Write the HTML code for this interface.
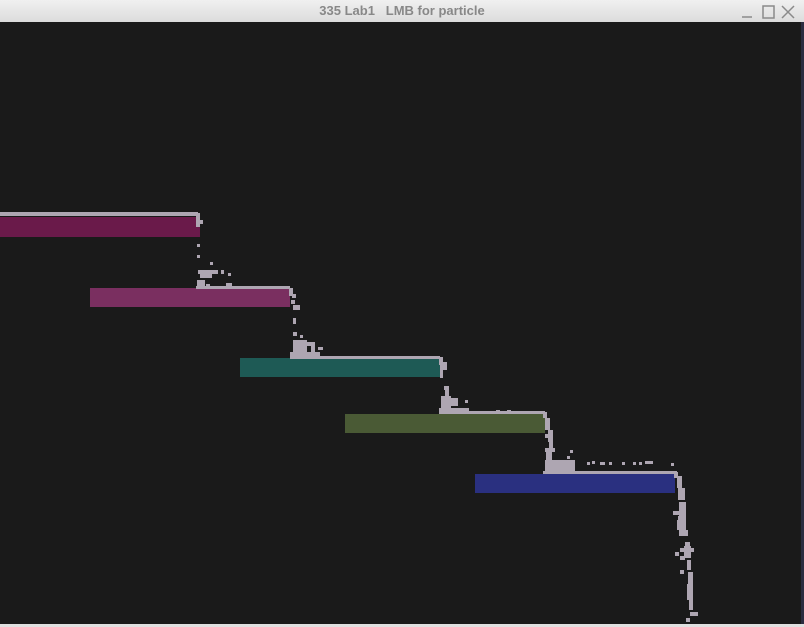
<!DOCTYPE html>
<html><head><style>
html,body{margin:0;padding:0;width:804px;height:627px;overflow:hidden;background:#1a1a1a}
#tb{position:absolute;left:0;top:0;width:804px;height:22px;background:linear-gradient(#f0f0f0,#dcdcdc);border-bottom:1px solid #999;font-family:"Liberation Sans",sans-serif;font-size:13px;color:#888;text-align:center;line-height:22px;font-weight:bold}
#cv{position:absolute;left:0;top:22px}
#rs{position:absolute;left:801px;top:22px;width:3px;height:602px;background:#2a2c40}
#bt{position:absolute;left:0;top:624px;width:804px;height:3px;background:#e0e0e0}
</style></head><body>
<div id="tb">335 Lab1&nbsp;&nbsp; LMB for particle
<svg style="position:absolute;left:740px;top:4px" width="62" height="16" fill="none" stroke="#8a8a8a" stroke-width="1.5">
<line x1="2" y1="13" x2="12" y2="13"/><rect x="23" y="2" width="11" height="12"/><path d="M42 2 L54 14 M54 2 L42 14"/></svg></div>
<div id="rs"></div>
<svg id="cv" width="801" height="602" viewBox="0 22 801 602">
<rect x="0" y="22" width="801" height="602" fill="#1a1a1a"/>
<rect x="0" y="217" width="200" height="20" fill="#6a1a4a"/>
<rect x="90" y="288" width="200" height="19" fill="#7a2f60"/>
<rect x="240" y="358" width="200" height="19" fill="#1e5a55"/>
<rect x="345" y="414" width="200" height="19" fill="#4a5a35"/>
<rect x="475" y="474" width="200" height="19" fill="#2a3080"/>
<g fill="#aea6b2">
<rect x="0" y="212" width="198" height="4"/>
<rect x="196" y="213" width="4" height="14"/><rect x="200" y="220" width="3" height="4"/>
<rect x="197" y="244" width="3" height="3"/><rect x="197" y="255" width="3" height="3"/>
<rect x="210" y="262" width="3" height="3"/><rect x="198" y="270" width="20" height="4"/>
<rect x="200" y="274" width="12" height="4"/><rect x="221" y="270" width="3" height="4"/>
<rect x="228" y="273" width="3" height="3"/><rect x="197" y="280" width="8" height="6"/>
<rect x="226" y="283" width="6" height="3"/><rect x="206" y="284" width="4" height="2"/>
<rect x="196" y="286" width="94" height="3"/>
<rect x="289" y="288" width="4" height="8"/><rect x="292" y="294" width="4" height="4"/>
<rect x="291" y="300" width="4" height="4"/><rect x="293" y="305" width="7" height="5"/>
<rect x="293" y="318" width="3" height="6"/><rect x="293" y="332" width="4" height="4"/>
<rect x="300" y="335" width="3" height="3"/><rect x="293" y="340" width="14" height="16"/>
<rect x="307" y="342" width="8" height="4"/><rect x="311" y="346" width="4" height="6"/>
<rect x="318" y="347" width="5" height="3"/><rect x="290" y="352" width="30" height="4"/>
<rect x="290" y="356" width="150" height="3"/>
<rect x="439" y="357" width="4" height="8"/><rect x="440" y="362" width="7" height="8"/>
<rect x="440" y="370" width="3" height="8"/><rect x="444" y="386" width="5" height="4"/>
<rect x="445" y="390" width="4" height="6"/><rect x="441" y="396" width="10" height="14"/>
<rect x="451" y="398" width="7" height="8"/><rect x="465" y="400" width="3" height="3"/>
<rect x="439" y="408" width="30" height="3"/>
<rect x="439" y="411" width="106" height="3"/><rect x="496" y="410" width="4" height="2"/><rect x="507" y="410" width="4" height="2"/>
<rect x="543" y="412" width="4" height="6"/><rect x="545" y="418" width="5" height="12"/>
<rect x="548" y="430" width="5" height="12"/><rect x="545" y="434" width="3" height="4"/>
<rect x="549" y="442" width="4" height="7"/><rect x="545" y="448" width="10" height="4"/>
<rect x="546" y="452" width="6" height="8"/><rect x="545" y="460" width="30" height="12"/>
<rect x="567" y="456" width="3" height="3"/><rect x="570" y="450" width="3" height="3"/>
<rect x="587" y="462" width="3" height="3"/><rect x="592" y="461" width="3" height="3"/>
<rect x="600" y="462" width="5" height="3"/><rect x="609" y="462" width="3" height="3"/>
<rect x="622" y="462" width="3" height="3"/><rect x="633" y="462" width="3" height="3"/>
<rect x="639" y="462" width="3" height="3"/><rect x="645" y="461" width="8" height="3"/>
<rect x="671" y="463" width="3" height="3"/>
<rect x="543" y="471" width="134" height="3"/>
<rect x="674" y="472" width="4" height="6"/><rect x="677" y="476" width="5" height="12"/>
<rect x="678" y="488" width="7" height="12"/><rect x="679" y="502" width="7" height="14"/>
<rect x="673" y="511" width="8" height="4"/><rect x="678" y="516" width="8" height="8"/>
<rect x="677" y="520" width="9" height="10"/><rect x="679" y="530" width="9" height="6"/>
<rect x="685" y="542" width="5" height="4"/><rect x="684" y="546" width="7" height="12"/>
<rect x="680" y="548" width="14" height="4"/><rect x="675" y="552" width="4" height="4"/>
<rect x="680" y="556" width="5" height="4"/><rect x="687" y="560" width="4" height="10"/>
<rect x="688" y="572" width="5" height="12"/><rect x="680" y="570" width="4" height="4"/>
<rect x="687" y="584" width="6" height="16"/><rect x="689" y="600" width="4" height="10"/>
<rect x="690" y="612" width="8" height="4"/><rect x="686" y="618" width="4" height="4"/>
</g>
</svg>
<div id="bt"></div>
</body></html>
